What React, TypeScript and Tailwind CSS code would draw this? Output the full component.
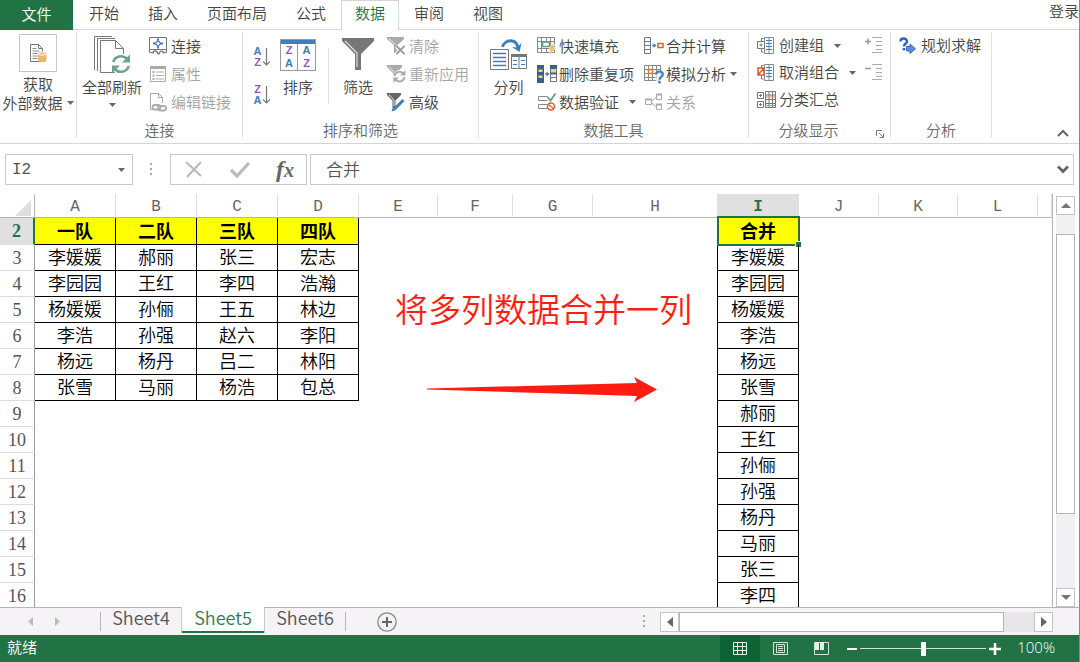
import React from 'react';

const SANS = "font-['Noto_Sans_CJK_SC',sans-serif]";

const menuTabs = ['开始', '插入', '页面布局', '公式', '数据', '审阅', '视图'];

const columns = [
  { name: 'A', width: 'w-[81px]' },
  { name: 'B', width: 'w-[81px]' },
  { name: 'C', width: 'w-[81px]' },
  { name: 'D', width: 'w-[81px]' },
  { name: 'E', width: 'w-[79px]' },
  { name: 'F', width: 'w-[75px]' },
  { name: 'G', width: 'w-[80px]' },
  { name: 'H', width: 'w-[125px]' },
  { name: 'I', width: 'w-[81px]' },
  { name: 'J', width: 'w-[80px]' },
  { name: 'K', width: 'w-[79px]' },
  { name: 'L', width: 'w-[80px]' },
  { name: '', width: '' },
];

const teams = [
  ['一队', '二队', '三队', '四队'],
  ['李媛媛', '郝丽', '张三', '宏志'],
  ['李园园', '王红', '李四', '浩瀚'],
  ['杨媛媛', '孙俪', '王五', '林边'],
  ['李浩', '孙强', '赵六', '李阳'],
  ['杨远', '杨丹', '吕二', '林阳'],
  ['张雪', '马丽', '杨浩', '包总'],
];

const merged = [
  '合并', '李媛媛', '李园园', '杨媛媛', '李浩', '杨远', '张雪', '郝丽',
  '王红', '孙俪', '孙强', '杨丹', '马丽', '张三', '李四',
];

interface IconProps {
  w: number;
  h: number;
  children: React.ReactNode;
}

const Icon: React.FC<IconProps> = ({ w, h, children }) => (
  <svg width={w} height={h} viewBox={`0 0 ${w} ${h}`} fill="none" className="shrink-0" aria-hidden="true">
    {children}
  </svg>
);

const Caret = () => (
  <Icon w={7} h={4}>
    <path d="M0 0h7L3.5 4z" fill="#666" />
  </Icon>
);

/* ---------- ribbon icons ---------- */

const ExternalDataIcon = () => (
  <Icon w={18} h={20}>
    <path d="M1.5 1.5h8l4 4v13h-12z" fill="#fff" stroke="#777" />
    <path d="M9.5 1.5v4h4" stroke="#777" />
    <path d="M3.5 5.500h4M3.500 8h7M3.500 10.500h5M3.500 13h5M3.500 15.500h5" stroke="#888" />
    <path d="M9 10.500v7c0 2 8.500 2 8.500 0v-7z" fill="#e9b872" />
    <ellipse cx="13.250" cy="10.500" rx="4.250" ry="1.800" fill="#f3cf98" stroke="#fff" strokeWidth=".6" />
  </Icon>
);

const RefreshAllIcon = () => (
  <Icon w={38} h={39}>
    <path d="M1.500 35V1.500H19M4.500 36V3.500H22" stroke="#777" />
    <path d="M7.500 5.500h15l8 8v24h-23z" fill="#fff" stroke="#777" />
    <path d="M22.500 5.500v8h8" stroke="#777" />
    <circle cx="28" cy="29" r="10.500" fill="#fff" />
    <path d="M20.300 27a8 7.500 0 0 1 13.500-3.500M35.700 31a8 7.500 0 0 1-13.500 3.500" stroke="#6ba58a" strokeWidth="2.600" />
    <path d="M37 19.500v8h-8zM19 38.500v-8h8z" fill="#6ba58a" />
  </Icon>
);

const ConnectionsIcon = () => (
  <Icon w={18} h={18}>
    <path d="M4.500 15.500h-4V.5h17v15h-3" stroke="#777" />
    <path d="M.5 12.500h17" stroke="#777" />
    <path d="M4 16.500c0-3.500 4.500-3.500 4.500 0 1 .8 1.500.5 2 0 0-3.500 4-3 4 0" stroke="#777" strokeWidth="1.300" />
    <rect x="7" y="4.500" width="4" height="4" transform="rotate(45 9 6.500)" stroke="#3f7dbd" strokeWidth="1.300" />
    <path d="M9 1.500v2M9 9.500v2M4 6.500h2M12 6.500h2" stroke="#3f7dbd" strokeWidth="2" />
  </Icon>
);

const PropertiesIcon = () => (
  <Icon w={18} h={18}>
    <path d="M1.500 1.500h15v15h-15z" stroke="#aaa" />
    <path d="M1 1h16v3H1z" fill="#aaa" />
    <path d="M7 7h8M7 10.500h8M7 14h8" stroke="#aaa" />
    <path d="M3.500 7h2M3.500 10.500h2M3.500 14h2" stroke="#aaa" strokeWidth="2" />
  </Icon>
);

const EditLinksIcon = () => (
  <Icon w={18} h={20}>
    <path d="M4 17.500H1.500v-16h8l4 4V11" stroke="#aaa" />
    <path d="M9.500 1.500v4h4" stroke="#aaa" />
    <rect x="3.500" y="13" width="8" height="4.500" rx="2.200" stroke="#aaa" strokeWidth="1.800" />
    <rect x="9" y="14" width="8" height="4.500" rx="2.200" stroke="#aaa" strokeWidth="1.800" />
  </Icon>
);

const LETTER = "font-['Liberation_Sans',sans-serif] text-[11px] font-bold";

const SortArrow = () => (
  <Icon w={8} h={20}>
    <path d="M4.500 1v17M1 14.500l3.500 3.500L8 14.500" stroke="#777" strokeWidth="1.200" />
  </Icon>
);

const SortAscIcon = () => (
  <span className="flex items-center">
    <span className={`flex w-[9px] flex-col text-center leading-[11px] ${LETTER}`}>
      <span className="text-[#3f7dbd]">A</span>
      <span className="text-[#9457c4]">Z</span>
    </span>
    <SortArrow />
  </span>
);

const SortDescIcon = () => (
  <span className="flex items-center">
    <span className={`flex w-[9px] flex-col text-center leading-[11px] ${LETTER}`}>
      <span className="text-[#9457c4]">Z</span>
      <span className="text-[#3f7dbd]">A</span>
    </span>
    <SortArrow />
  </span>
);

const SortIcon = () => (
  <span className={`flex h-8 w-9 flex-col border border-[#999] ${LETTER}`}>
    <span className="h-1 bg-[#3f7dbd]" />
    <span className="grid flex-1 grid-cols-2 text-center leading-[13px]">
      <span className="border-r border-[#999] text-[#9457c4]">Z</span>
      <span className="text-[#3f7dbd]">A</span>
      <span className="border-r border-[#999] text-[#3f7dbd]">A</span>
      <span className="text-[#9457c4]">Z</span>
    </span>
  </span>
);

const FilterIcon = () => (
  <Icon w={34} h={33}>
    <path d="M1 0h32v3L20 16v16h-6V16L1 3z" fill="#777" />
    <path d="M4 3l12 12v14" stroke="#ddd" strokeWidth="1.200" />
  </Icon>
);

const ClearIcon = () => (
  <Icon w={18} h={18}>
    <path d="M0 0h17v2l-6.500 6v8H7V8L0 2z" fill="#aaa" />
    <path d="M2 1.500l6.500 6" stroke="#eee" />
    <path d="M9.500 9l8 8M17.500 9l-8 8" stroke="#fff" strokeWidth="4" />
    <path d="M9.500 9l8 8M17.500 9l-8 8" stroke="#999" strokeWidth="1.800" />
  </Icon>
);

const ReapplyIcon = () => (
  <Icon w={19} h={18}>
    <path d="M0 0h15v2L9 8v5H6V8L0 2z" fill="#aaa" />
    <path d="M2 1.500l5 5.500" stroke="#eee" />
    <circle cx="12.500" cy="11.500" r="6.500" fill="#fff" />
    <path d="M7.500 11a5 5 0 0 1 9-2M17.500 12a5 5 0 0 1-9 2.500" stroke="#aaa" strokeWidth="2" />
    <path d="M18.500 5v5.500H13zM6.500 18v-5.500H12z" fill="#aaa" />
  </Icon>
);

const AdvancedIcon = () => (
  <Icon w={18} h={19}>
    <path d="M0 0h14v2L8.500 7.500V15h-3V7.500L0 2z" fill="#666" />
    <path d="M2 1.500l5 5.500v6" stroke="#ddd" />
    <path d="M16.500 7L7 16.500" stroke="#3f7dbd" strokeWidth="3" />
    <path d="M4.500 18.500l1-3.500 2.500 2.500z" fill="#3f7dbd" />
  </Icon>
);

const TextToColumnsIcon = () => (
  <Icon w={37} h={32}>
    <path d="M.5 10.500h18v20H.5z" stroke="#777" />
    <path d="M3 14.500h13M3 18.500h13M3 22.500h13M3 26.500h13" stroke="#3f7dbd" strokeWidth="1.400" />
    <path d="M21.500 15.500h15v14h-15zM29 15v15" stroke="#777" />
    <path d="M21 15h16v3H21z" fill="#777" />
    <path d="M23 21.500h4M23 25.500h4M31 21.500h4M31 25.500h4" stroke="#3f7dbd" />
    <path d="M12.500 8c2-8 14-9 15.500 1" stroke="#3f7dbd" strokeWidth="2.800" />
    <path d="M31.500 4l-2 9-7.500-5 5 .5z" fill="#3f7dbd" />
  </Icon>
);

const FlashFillIcon = () => (
  <Icon w={19} h={18}>
    <path d="M.5.5h17v15H.5zM.5 4.500h17M.5 11.500h17M4.500.5v15M9.500.5v4M9.500 11v5M13.500.5v15" stroke="#888" />
    <path d="M5.500 5h7v4.500h-7z" fill="#fff" stroke="#5f9e80" strokeWidth="1.500" />
    <path d="M14.500 7.500h4l-2 3.500h2.500L12.500 18l1.500-5h-2.500z" fill="#f0bd63" stroke="#fff" strokeWidth=".5" />
  </Icon>
);

const RemoveDuplicatesIcon = () => (
  <Icon w={20} h={18}>
    <path d="M0 0h7v18H0z" fill="#38618c" />
    <path d="M1.500 4.500h4v2.500h-4zM1.500 10.500h4v2.500h-4z" fill="#f3cf8b" />
    <path d="M8 9h3" stroke="#3f7dbd" strokeWidth="1.300" />
    <path d="M9.500 6.500l3 2.500-3 2.500z" fill="#3f7dbd" />
    <path d="M13.500.5h6v16h-6zM13.500 12.500h6" stroke="#777" />
    <path d="M13 0h7v4h-7z" fill="#38618c" />
    <path d="M14 4h5v4h-5z" fill="#f3cf8b" />
    <path d="M13 7.500h7v2h-7z" fill="#38618c" />
  </Icon>
);

const ValidationIcon = () => (
  <Icon w={19} h={18}>
    <path d="M10.500 3.500H1.500v4h9M10.500 11.500H1.500v4h9" stroke="#888" />
    <path d="M10.500 4l3 3.500 5-7" stroke="#5f9e80" strokeWidth="1.800" />
    <circle cx="14" cy="13.500" r="3.500" stroke="#dc6038" strokeWidth="1.500" />
    <path d="M11.500 11.500l5 4" stroke="#dc6038" strokeWidth="1.300" />
  </Icon>
);

const ConsolidateIcon = () => (
  <Icon w={20} h={18}>
    <path d="M.5.5h6v16h-6zM.5 4.500h6M.5 8.500h6M.5 12.500h6" stroke="#777" />
    <path d="M8 8.500h3" stroke="#3f7dbd" strokeWidth="1.300" />
    <path d="M9.500 6l3 2.500-3 2.500z" fill="#3f7dbd" />
    <path d="M14 6.500h5v4h-5z" stroke="#dc6038" strokeWidth="1.500" />
  </Icon>
);

const WhatIfIcon = () => (
  <Icon w={20} h={19}>
    <path d="M.5.5h16v15H.5zM.5 4.500h16M.5 8.500h16M.5 12.500h16M4.500.5v15M8.500.5v15M12.500.5v15" stroke="#888" />
    <path d="M4.500 4.500h4v4h-4z" fill="#fff" stroke="#e0743a" strokeWidth="1.500" />
    <path d="M10.500 6h9.500v13h-8z" fill="#fff" fillOpacity=".7" />
    <path d="M12 9.500c0-4 6.800-4 6.800 0 0 2.500-3.300 2.500-3.300 5.200" stroke="#3f7dbd" strokeWidth="2.200" />
    <path d="M14.300 16h2.400v2.500h-2.400z" fill="#3f7dbd" />
  </Icon>
);

const RelationsIcon = () => (
  <Icon w={19} h={18}>
    <path d="M1.500 6.500h6v5h-6zM12.500 1.500h5v5h-5zM12.500 11.500h5v5h-5zM7.500 8.500l5-4.500M7.500 9.500l5 4.500" stroke="#aaa" />
    <path d="M1 5.500h7v2H1zM12 .5h6v2h-6zM12 10.500h6v2h-6z" fill="#aaa" />
  </Icon>
);

const GroupIcon = () => (
  <Icon w={18} h={18}>
    <path d="M7.500.5h9v16h-9zM12 .5v16" stroke="#888" />
    <path d="M9 3.500h6M9 6.500h6M9 9.500h6M9 12.500h6" stroke="#3f7dbd" />
    <path d="M6.500 1.500h-2v3M6.500 15h-2v-3" stroke="#777" />
    <path d="M.5 4.500h7v7h-7z" fill="#fff" stroke="#777" />
    <path d="M2.500 8h3M4 6.500v3" stroke="#777" />
  </Icon>
);

const UngroupIcon = () => (
  <Icon w={18} h={18}>
    <path d="M7.500.5h9v16h-9zM12 .5v16" stroke="#888" />
    <path d="M9 3.500h6M9 6.500h6M9 9.500h6M9 12.500h6" stroke="#3f7dbd" />
    <path d="M6.500 1.500h-2v2M6.500 15h-2v-3" stroke="#777" />
    <path d="M1 4h6v7H1zM1 11l6-7" fill="#fff" stroke="#dc5533" strokeWidth="1.500" />
  </Icon>
);

const SubtotalIcon = () => (
  <Icon w={20} h={18}>
    <path d="M.5 1.500h6v6h-6zM.5 10.500h6v6h-6zM2 4.500h3M3.500 3v3M2 13.500h3M3.500 12v3" stroke="#777" />
    <path d="M8.500.5h10v16h-10zM12 .5v16M15.500.5v16M8.500 4h10M8.500 8.500h10M8.500 12.500h10" stroke="#777" />
    <path d="M9 6h9M9 14.500h9" stroke="#dc8a68" />
  </Icon>
);

const ShowDetailIcon = () => (
  <Icon w={18} h={17}>
    <path d="M0 4.500h6M3 1.500v6" stroke="#999" strokeWidth="1.500" />
    <path d="M7 .5h10M11 4.500h6M11 8.500h6M11 12.500h6M7 15.500h10" stroke="#aaa" />
  </Icon>
);

const HideDetailIcon = () => (
  <Icon w={18} h={17}>
    <path d="M0 4.500h6" stroke="#999" strokeWidth="1.500" />
    <path d="M7 .5h10M11 4.500h6M11 8.500h6M11 12.500h6M7 15.500h10" stroke="#aaa" />
  </Icon>
);

const SolverIcon = () => (
  <Icon w={17} h={17}>
    <path d="M1.500 4.500c0-4 6.500-4 6.500 0 0 2.200-3 2-3 5" stroke="#2f5fc4" strokeWidth="2.400" />
    <path d="M3.700 11h2.600v2.300H3.700z" fill="#2f5fc4" />
    <path d="M7.500 9.500H11V7l5.500 4.800L11 16.500V14H7.500z" fill="#5b8ae6" stroke="#2b55b0" strokeWidth=".8" />
  </Icon>
);

/* ---------- ribbon ---------- */

interface RibbonGroupProps {
  label: string;
  className: string;
  children: React.ReactNode;
  launcher?: boolean;
}

const RibbonGroup: React.FC<RibbonGroupProps> = ({ label, className, children, launcher }) => (
  <section className={`flex h-[106px] shrink-0 flex-col border-r border-[#e1e1e1] ${className}`}>
    <div className="flex flex-1 items-start">{children}</div>
    <div className="flex h-4 items-center text-[#6a6a6a]">
      <span className={`flex-1 text-center leading-4 ${launcher ? 'pr-2' : ''}`}>{label}</span>
      {launcher && (
        <button className="mr-1.5 self-end" aria-label="分级显示设置">
          <Icon w={8} h={8}>
            <path d="M.5 6V.5H6M3 3l4 4M7.500 3.500v4h-4" stroke="#777" />
          </Icon>
        </button>
      )}
    </div>
  </section>
);

interface ToolButtonProps {
  icon: React.ReactNode;
  label: string;
  disabled?: boolean;
  menu?: 'near' | 'far';
  compact?: boolean;
}

const ToolButton: React.FC<ToolButtonProps> = ({ icon, label, disabled, menu, compact }) => (
  <button
    disabled={disabled}
    className={`flex items-center whitespace-nowrap ${compact ? 'h-[27px]' : 'h-7'} ${disabled ? 'text-[#a3a3a3]' : 'text-[#444]'}`}
  >
    <span className="flex w-[22px] shrink-0">{icon}</span>
    {label}
    {menu && (
      <span className={menu === 'far' ? 'ml-2.5' : 'ml-1'}>
        <Caret />
      </span>
    )}
  </button>
);

interface BigButtonProps {
  icon: React.ReactNode;
  label: string;
  menu?: boolean;
}

const BigButton: React.FC<BigButtonProps> = ({ icon, label, menu }) => (
  <button className="flex flex-col items-center whitespace-nowrap text-[#444]">
    <span className="flex h-[45px] items-center">{icon}</span>
    <span className="leading-5">{label}</span>
    {menu && (
      <span className="mt-1.5">
        <Caret />
      </span>
    )}
  </button>
);

const Ribbon = () => (
  <div className="flex h-[114px] shrink-0 border-b border-[#d5d5d5] pt-0.5 text-[15px]">
    <section className="h-[106px] w-[77px] shrink-0 border-r border-[#e1e1e1]">
      <button className="flex w-full flex-col items-center pt-0.5 leading-[19px] text-[#444]">
        <span className="mb-0.5 flex h-[38px] w-[38px] items-center justify-center border border-[#c6c6c6]">
          <ExternalDataIcon />
        </span>
        <span>获取</span>
        <span className="flex items-center gap-1 whitespace-nowrap">
          外部数据
          <Caret />
        </span>
      </button>
    </section>

    <RibbonGroup label="连接" className="w-[166px]">
      <div className="pl-[5px]">
        <BigButton icon={<RefreshAllIcon />} label="全部刷新" menu />
      </div>
      <div className="ml-[7px] flex flex-col">
        <ToolButton icon={<ConnectionsIcon />} label="连接" />
        <ToolButton icon={<PropertiesIcon />} label="属性" disabled />
        <ToolButton icon={<EditLinksIcon />} label="编辑链接" disabled />
      </div>
    </RibbonGroup>

    <RibbonGroup label="排序和筛选" className="w-[236px]">
      <div className="ml-2.5 flex flex-col gap-4 pt-3.5">
        <button aria-label="升序">
          <SortAscIcon />
        </button>
        <button aria-label="降序">
          <SortDescIcon />
        </button>
      </div>
      <div className="ml-2.5">
        <BigButton icon={<SortIcon />} label="排序" />
      </div>
      <div className="mt-4 ml-3 h-14 border-r border-[#e1e1e1]" />
      <div className="ml-3">
        <BigButton icon={<FilterIcon />} label="筛选" />
      </div>
      <div className="ml-3 flex flex-col">
        <ToolButton icon={<ClearIcon />} label="清除" disabled />
        <ToolButton icon={<ReapplyIcon />} label="重新应用" disabled />
        <ToolButton icon={<AdvancedIcon />} label="高级" />
      </div>
    </RibbonGroup>

    <RibbonGroup label="数据工具" className="w-[270px]">
      <div className="ml-[11px]">
        <BigButton icon={<TextToColumnsIcon />} label="分列" />
      </div>
      <div className="ml-2.5 flex flex-col">
        <ToolButton icon={<FlashFillIcon />} label="快速填充" />
        <ToolButton icon={<RemoveDuplicatesIcon />} label="删除重复项" />
        <ToolButton icon={<ValidationIcon />} label="数据验证" menu="far" />
      </div>
      <div className="ml-2 flex flex-col">
        <ToolButton icon={<ConsolidateIcon />} label="合并计算" />
        <ToolButton icon={<WhatIfIcon />} label="模拟分析" menu="near" />
        <ToolButton icon={<RelationsIcon />} label="关系" disabled />
      </div>
    </RibbonGroup>

    <RibbonGroup label="分级显示" className="w-[142px]" launcher>
      <div className="ml-2 flex flex-1 flex-col">
        <ToolButton icon={<GroupIcon />} label="创建组" menu="far" compact />
        <ToolButton icon={<UngroupIcon />} label="取消组合" menu="far" compact />
        <ToolButton icon={<SubtotalIcon />} label="分类汇总" compact />
      </div>
      <div className="mr-[7px] flex flex-col">
        <button disabled className="flex h-[27px] items-center" aria-label="显示明细数据">
          <ShowDetailIcon />
        </button>
        <button disabled className="flex h-[27px] items-center" aria-label="隐藏明细数据">
          <HideDetailIcon />
        </button>
      </div>
    </RibbonGroup>

    <RibbonGroup label="分析" className="w-[101px]">
      <div className="ml-2">
        <ToolButton icon={<SolverIcon />} label="规划求解" compact />
      </div>
    </RibbonGroup>

    <button className="mr-2.5 mb-1.5 ml-auto self-end" aria-label="折叠功能区">
      <Icon w={12} h={8}>
        <path d="M1 7l5-5 5 5" stroke="#666" strokeWidth="2" />
      </Icon>
    </button>
  </div>
);

/* ---------- formula bar ---------- */

const Dots = () => (
  <Icon w={3} h={13}>
    <path d="M0 0h2v2H0zM0 5h2v2H0zM0 10h2v2H0z" fill="#aaa" />
  </Icon>
);

const FormulaBar = () => (
  <div className="mt-2.5 mb-[9px] flex h-[31px] shrink-0 pr-[5px] pl-[5px]">
    <div className="flex w-32 items-center border border-[#c9c9c9] pr-[7px]">
      <input
        aria-label="名称框"
        defaultValue="I2"
        className="min-w-0 flex-1 pl-1.5 font-['Liberation_Mono',monospace] text-base text-[#555] outline-none"
      />
      <button aria-label="名称列表">
        <Caret />
      </button>
    </div>
    <div className="flex w-[37px] items-center justify-center">
      <Dots />
    </div>
    <div className="flex w-[137px] items-center justify-between border border-[#c9c9c9] pr-3 pl-3.5">
      <button aria-label="取消">
        <Icon w={18} h={17}>
          <path d="M1 1l15 14M16 1L2 16" stroke="#bbb" strokeWidth="2.200" />
        </Icon>
      </button>
      <button aria-label="输入">
        <Icon w={20} h={16}>
          <path d="M1 8l6 6L19 1" stroke="#bbb" strokeWidth="3.200" />
        </Icon>
      </button>
      <button
        aria-label="插入函数"
        className="font-['Liberation_Serif',serif] text-2xl leading-6 font-bold text-[#666] italic"
      >
        f<span className="text-xl">x</span>
      </button>
    </div>
    <div className="ml-[3px] flex flex-1 items-center border border-[#c9c9c9] pr-1">
      <input
        aria-label="编辑栏"
        defaultValue="合并"
        className="min-w-0 flex-1 pb-0.5 pl-[15px] text-[17px] text-[#555] outline-none"
      />
      <button aria-label="展开编辑栏">
        <Icon w={12} h={9}>
          <path d="M1 1.500l5 5 5-5" stroke="#666" strokeWidth="3" />
        </Icon>
      </button>
    </div>
  </div>
);

/* ---------- sheet ---------- */

const Sheet = () => {
  const renderCell = (row: number, col: number) => {
    const header = row === 0;
    const box = header ? 'bg-[#ffff00] font-bold' : '';
    if (col < 4 && teams[row]) {
      return (
        <td key={col} className={`border-r border-b border-black pb-0.5 ${box}`}>
          {teams[row][col]}
        </td>
      );
    }
    if (col === 7) {
      return <td key={col} className="border-r border-black" />;
    }
    if (col === 8) {
      return (
        <td key={col} className={`relative border-r border-b border-black pb-0.5 ${box}`}>
          {merged[row]}
          {header && (
            <>
              <span className="absolute -inset-y-0.5 -right-0.5 -left-px border-2 border-[#217346]" />
              <span className="absolute -right-[3px] -bottom-[3px] h-[5px] w-[5px] bg-[#217346] outline outline-white" />
            </>
          )}
        </td>
      );
    }
    return <td key={col} />;
  };

  return (
    <div className="relative min-w-0 flex-1 overflow-hidden border-r border-[#b5b5b5]">
      <table className="w-full table-fixed border-separate border-spacing-0 text-center text-[18px] leading-[23px] text-black">
        <thead className="font-['Liberation_Mono',monospace] text-base text-[#666]">
          <tr className="h-6">
            <th className="w-[35px] border-r border-b border-[#b5b5b5]">
              <span className="flex justify-end pt-1 pr-[3px]">
                <Icon w={16} h={16}>
                  <path d="M16 0v16H0z" fill="#dedede" />
                </Icon>
              </span>
            </th>
            {columns.map((c, i) => (
              <th
                key={i}
                className={`h-6 border-r border-b border-r-[#e0e0e0] border-b-[#b5b5b5] p-0 pt-0.5 leading-5 ${c.width} ${
                  c.name === 'I' ? 'bg-[#e0e0e0] font-bold text-[#217346]' : 'font-normal'
                }`}
              >
                {c.name}
              </th>
            ))}
          </tr>
        </thead>
        <tbody>
          {merged.map((_, row) => (
            <tr key={row} className={row === 0 ? 'h-[27px]' : 'h-[26px]'}>
              <th
                className={`border-r border-b border-b-[#dcdcdc] font-['Liberation_Serif',serif] text-[18px] leading-5 ${
                  row === 0
                    ? 'border-r-2 border-r-[#217346] bg-[#e0e0e0] font-bold text-[#217346]'
                    : 'border-r-[#999] font-normal text-[#555]'
                }`}
              >
                {row + 2}
              </th>
              {columns.map((_c, col) => renderCell(row, col))}
            </tr>
          ))}
        </tbody>
      </table>

      {/* annotation drawn over the cells */}
      <div className="absolute top-[90px] left-[395px] text-[#ff1c10]">
        <p className="text-[33px] leading-12 font-[350] whitespace-nowrap">将多列数据合并一列</p>
        <svg width="230" height="26" viewBox="0 0 230 26" className="mt-[45px] ml-8" aria-hidden="true">
          <path d="M0 11.500L210 6l-3-6 23 12.500L207 25l3-6L0 12.500z" fill="#ff1c10" />
        </svg>
      </div>
    </div>
  );
};

const arrowPaths = {
  up: 'M0 6h10L5 1z',
  down: 'M0 1h10L5 6z',
};

const VerticalScrollbar = () => (
  <div className="mt-0.5 mr-1 ml-[3px] flex w-[19px] flex-col bg-[#f1f0f2]">
    <button aria-label="向上滚动" className="flex h-[19px] items-center justify-center border border-[#c4c4c4] bg-white">
      <Icon w={10} h={7}>
        <path d={arrowPaths.up} fill="#777" />
      </Icon>
    </button>
    <div className="flex flex-1 flex-col pt-[19px]">
      <div className="h-[79%] border border-[#b5b5b5] bg-white" />
    </div>
    <button aria-label="向下滚动" className="flex h-[19px] items-center justify-center border border-[#c4c4c4] bg-white">
      <Icon w={10} h={7}>
        <path d={arrowPaths.down} fill="#777" />
      </Icon>
    </button>
  </div>
);

/* ---------- sheet tabs & status bar ---------- */

const SheetTabs = () => (
  <div className="flex h-7 shrink-0 border-t border-[#b5b5b5] bg-[#f5f3f6] text-lg text-[#555]">
    <div className="flex w-[100px] items-center gap-[22px] pl-7">
      <button aria-label="上一个工作表">
        <Icon w={5} h={9}>
          <path d="M5 0v9L0 4.500z" fill="#bbb" />
        </Icon>
      </button>
      <button aria-label="下一个工作表">
        <Icon w={5} h={9}>
          <path d="M0 0v9l5-4.500z" fill="#bbb" />
        </Icon>
      </button>
    </div>
    <div className="my-1 w-px bg-[#b5b5b5]" />
    <button className="h-[25px] w-[81px] border-r border-[#c9c9c9] pb-[7px] leading-[18px]">Sheet4</button>
    <button className="-mt-px h-[26px] w-[82px] border-b-2 border-[#217346] bg-white pb-1 leading-5 text-[#2d7d4f]">
      Sheet5
    </button>
    <button className="h-[25px] w-[81px] border-l border-[#c9c9c9] pb-[7px] leading-[18px]">Sheet6</button>
    <div className="my-1 w-px bg-[#b5b5b5]" />
    <button aria-label="新工作表" className="ml-[31px]">
      <Icon w={20} h={20}>
        <circle cx="10" cy="10" r="9.200" stroke="#888" strokeWidth="1.300" />
        <path d="M5 10h10M10 5v10" stroke="#666" strokeWidth="2" />
      </Icon>
    </button>
    <div className="ml-auto flex items-center">
      <Dots />
    </div>
    <div className="mt-1 mr-[26px] ml-3.5 flex h-5 w-[393px] bg-[#e8e6e9]">
      <button aria-label="向左滚动" className="flex w-[19px] items-center justify-center border border-[#c4c4c4] bg-white">
        <Icon w={6} h={10}>
          <path d="M6 0v10L0 5z" fill="#666" />
        </Icon>
      </button>
      <div className="flex-1 pr-[30px]">
        <div className="h-full border border-[#b5b5b5] bg-white" />
      </div>
      <button aria-label="向右滚动" className="flex w-[19px] items-center justify-center border border-[#c4c4c4] bg-white">
        <Icon w={6} h={10}>
          <path d="M0 0v10l6-5z" fill="#666" />
        </Icon>
      </button>
    </div>
  </div>
);

const StatusBar = () => (
  <div className="flex h-[27px] shrink-0 items-center bg-[#217346] pl-[7px] text-[15px] text-white">
    <span className="pb-0.5">就绪</span>
    <button aria-label="普通视图" className="ml-auto flex h-full w-10 items-center justify-center bg-[#0d6333]">
      <Icon w={14} h={13}>
        <path d="M.5.5h13v12H.5zM.5 4.500h13M.5 8.500h13M4.500.5v12M9.500.5v12" stroke="#e3f2e6" />
      </Icon>
    </button>
    <button aria-label="页面布局视图" className="ml-[13px]">
      <Icon w={15} h={13}>
        <path d="M.5.5h14v12H.5zM3.500 2.500h8v8h-8zM5 4.500h5M5 6.500h5M5 8.500h5" stroke="#cfe6d6" />
      </Icon>
    </button>
    <button aria-label="分页预览" className="ml-[26px]">
      <Icon w={15} h={13}>
        <path d="M.5.5h14v12H.5z" stroke="#cfe6d6" />
        <path d="M1 0h4v8H1zM6 0h4v8H6z" fill="#e3f2e6" />
      </Icon>
    </button>
    <button aria-label="缩小" className="ml-[18px]">
      <Icon w={10} h={12}>
        <path d="M0 6h10" stroke="#fff" strokeWidth="2" />
      </Icon>
    </button>
    <input
      type="range"
      aria-label="显示比例"
      defaultValue={50}
      className="ml-[3px] h-3.5 w-[126px] appearance-none bg-transparent bg-[linear-gradient(#cfe6d6,#cfe6d6)] bg-[length:100%_1px] bg-center bg-no-repeat [&::-webkit-slider-thumb]:h-3.5 [&::-webkit-slider-thumb]:w-[5px] [&::-webkit-slider-thumb]:appearance-none [&::-webkit-slider-thumb]:bg-white"
    />
    <button aria-label="放大" className="ml-[3px]">
      <Icon w={12} h={12}>
        <path d="M0 6h12M6 0v12" stroke="#fff" strokeWidth="2.500" />
      </Icon>
    </button>
    <span className="mr-6 ml-4 pb-0.5 font-['Open_Sans',sans-serif]">100%</span>
  </div>
);

export default function App() {
  return (
    <div className={`flex h-screen flex-col overflow-hidden border-r border-[#8a8a8a] bg-white font-[350] ${SANS}`}>
      <nav className="flex h-[30px] shrink-0 border-b border-[#d5d5d5] text-[15px] text-[#444]">
        <button className="mr-0.5 h-[30px] w-[73px] bg-[#217346] pb-0.5 text-white">文件</button>
        <div className="flex gap-px">
          {menuTabs.map((tab) => (
            <button
              key={tab}
              className={
                tab === '数据'
                  ? 'h-[30px] border-x border-t border-[#d5d5d5] bg-white px-[13px] pb-1 text-[#217346]'
                  : 'px-3.5 pb-0.5'
              }
            >
              {tab}
            </button>
          ))}
        </div>
        <a href="#login" className="ml-auto">
          登录
        </a>
      </nav>
      <Ribbon />
      <FormulaBar />
      <div className="flex min-h-0 flex-1">
        <Sheet />
        <VerticalScrollbar />
      </div>
      <SheetTabs />
      <StatusBar />
    </div>
  );
}
